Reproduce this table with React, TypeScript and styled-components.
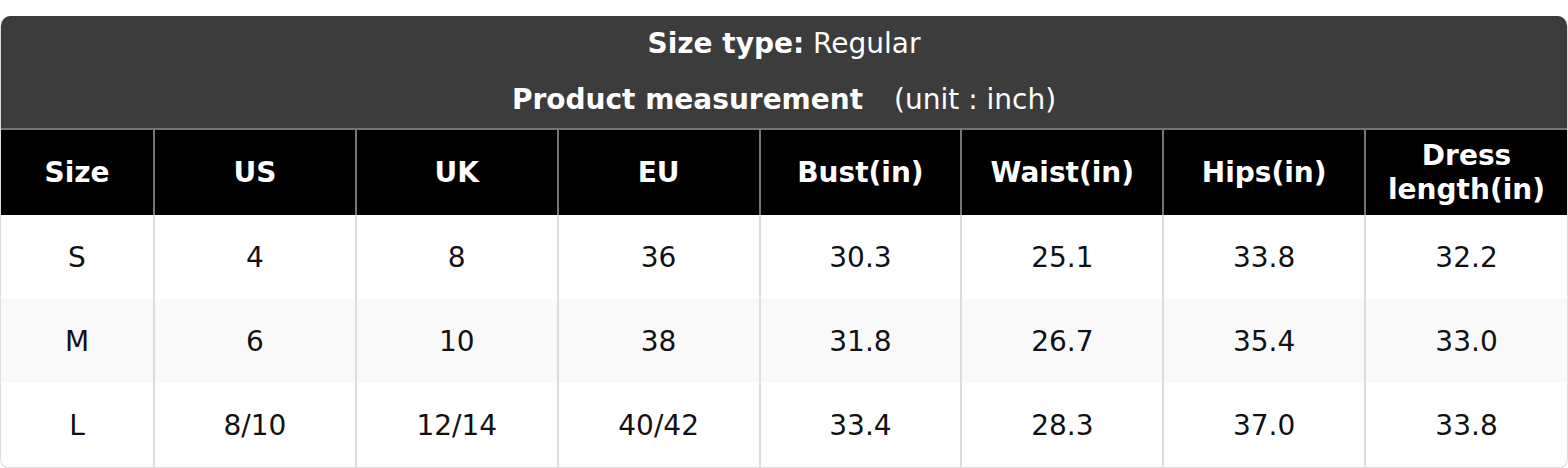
import React from 'react'
import styled, { createGlobalStyle } from 'styled-components'

const GlobalStyle = createGlobalStyle`
  html, body {
    margin: 0;
    padding: 0;
    background: #ffffff;
    font-family: 'DejaVu Sans', 'Liberation Sans', sans-serif;
  }
`

const Page = styled.div`
  padding-top: 16px;
`

const Card = styled.div`
  border: 1px solid #dddddd;
  border-top: none;
  border-bottom-width: 2px;
  border-radius: 10px;
  overflow: hidden;
  background: #ffffff;
`

const TitleBand = styled.div`
  background: #3c3c3c;
  color: #ffffff;
  padding: 11px 0 11px;
  text-align: center;
  font-size: 28px;
`

const TitleLine = styled.div<{ spaced?: boolean }>`
  line-height: 34px;
  margin-top: ${({ spaced }) => (spaced ? '22px' : '0')};
`

const Strong = styled.span`
  font-weight: bold;
`

const Unit = styled.span`
  margin-left: 31px;
`

const Table = styled.table`
  width: 100%;
  border-collapse: collapse;
  table-layout: fixed;
`

const HeadCell = styled.th`
  background: #000000;
  color: #ffffff;
  font-weight: bold;
  font-size: 28px;
  line-height: 34px;
  height: 86px;
  padding: 0 4px;
  text-align: center;
  border-top: 2px solid #757575;
  border-left: 2px solid #757575;
  box-sizing: border-box;

  &:first-child {
    border-left: none;
  }
`

const Row = styled.tr<{ shaded?: boolean }>`
  background: ${({ shaded }) => (shaded ? '#f9f9f9' : '#ffffff')};
`

const Cell = styled.td`
  height: 84px;
  padding: 0;
  text-align: center;
  font-size: 28px;
  color: #111111;
  border-left: 2px solid #dddddd;

  &:first-child {
    border-left: none;
  }
`

const columns = ['Size', 'US', 'UK', 'EU', 'Bust(in)', 'Waist(in)', 'Hips(in)', 'Dress length(in)']

const rows = [
  ['S', '4', '8', '36', '30.3', '25.1', '33.8', '32.2'],
  ['M', '6', '10', '38', '31.8', '26.7', '35.4', '33.0'],
  ['L', '8/10', '12/14', '40/42', '33.4', '28.3', '37.0', '33.8'],
]

export default function App() {
  return (
    <Page>
      <GlobalStyle />
      <Card>
        <TitleBand>
          <TitleLine>
            <Strong>Size type:</Strong> Regular
          </TitleLine>
          <TitleLine spaced>
            <Strong>Product measurement</Strong>
            <Unit>(unit : inch)</Unit>
          </TitleLine>
        </TitleBand>
        <Table>
          <colgroup>
            <col style={{ width: 153 }} />
            {columns.slice(1).map((c) => (
              <col key={c} />
            ))}
          </colgroup>
          <thead>
            <tr>
              {columns.map((c) => (
                <HeadCell key={c}>{c}</HeadCell>
              ))}
            </tr>
          </thead>
          <tbody>
            {rows.map((r, i) => (
              <Row key={r[0]} shaded={i === 1}>
                {r.map((v, j) => (
                  <Cell key={j}>{v}</Cell>
                ))}
              </Row>
            ))}
          </tbody>
        </Table>
      </Card>
    </Page>
  )
}
